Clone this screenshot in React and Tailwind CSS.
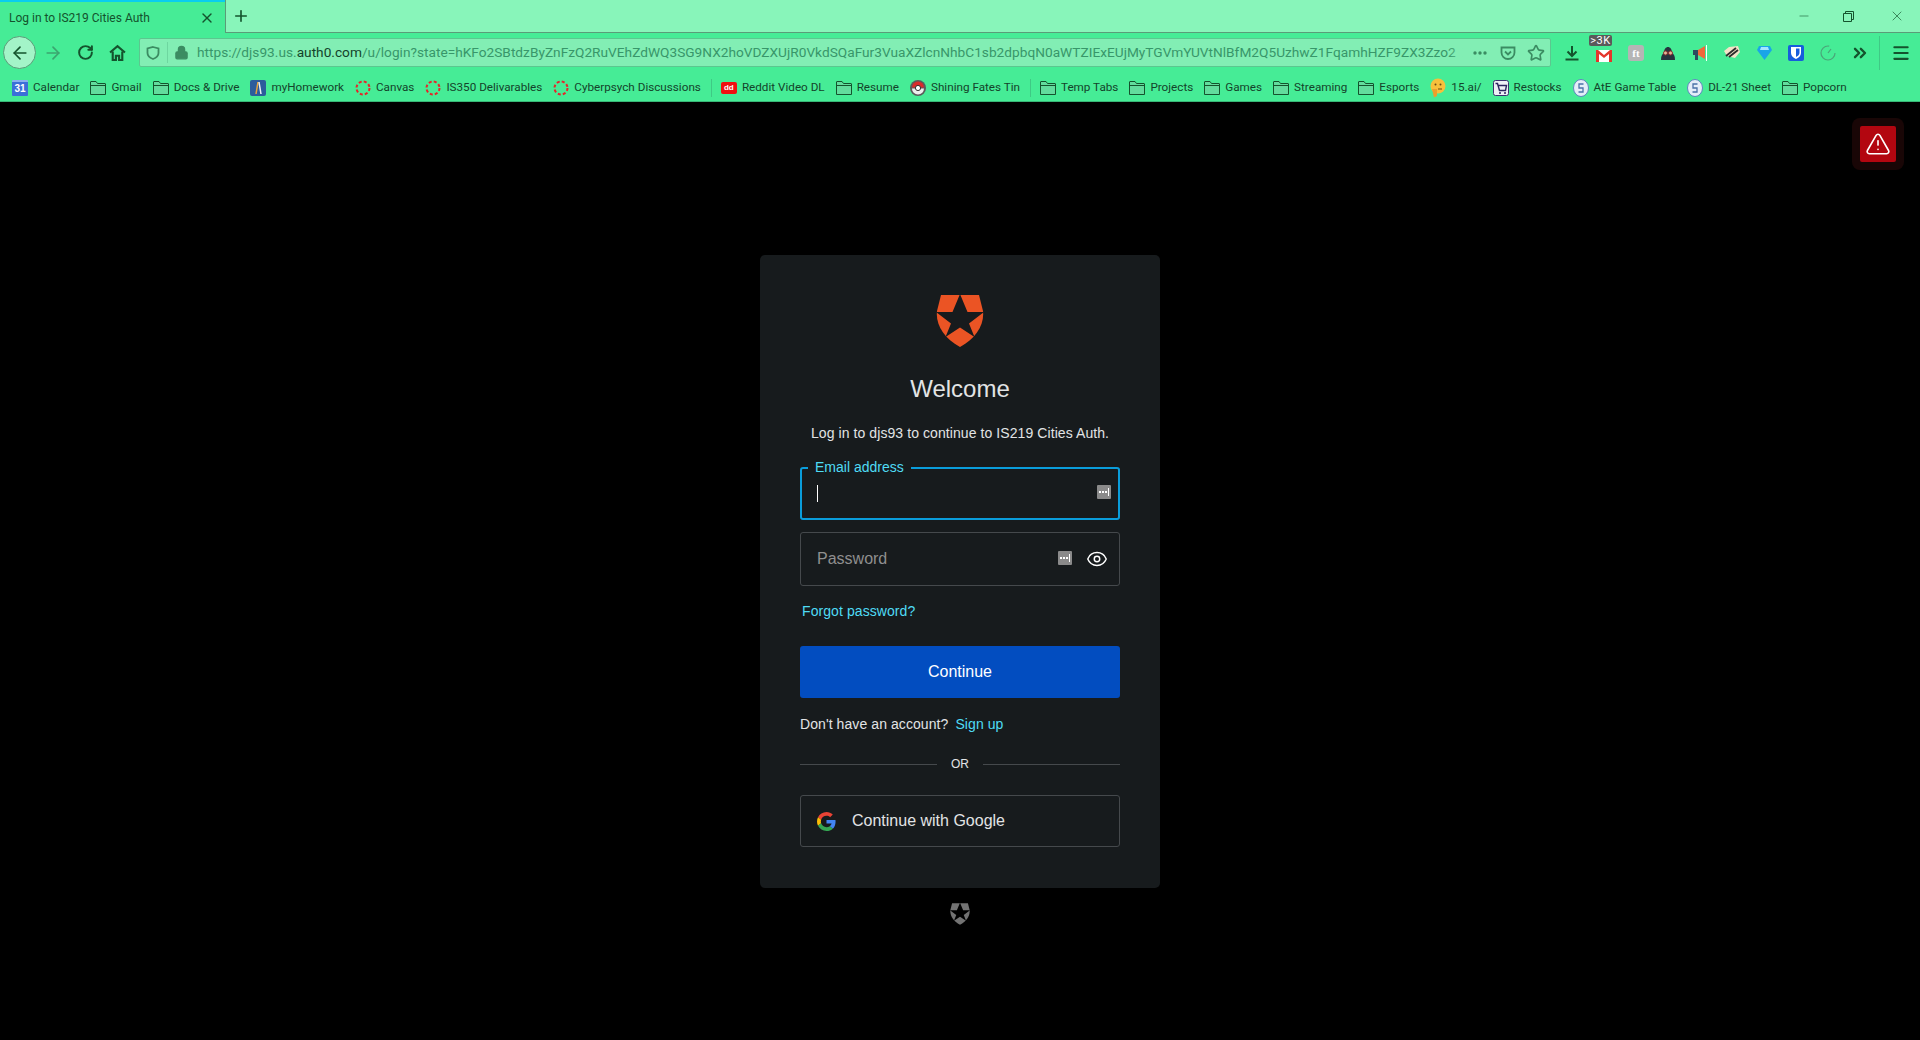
import React from 'react';
import { ArrowLeft, ArrowRight, RotateCw, ChevronsRight, Menu, Plus, X, Minus, Lock, Star, Eye, TriangleAlert } from 'lucide-react';

const Folder = () => (
  <svg width="16" height="16" viewBox="0 0 16 16" fill="none" stroke="#14532d" strokeWidth="1">
    <path d="M.5 14.500v-12.500a.5.5 0 0 1 .5-.5h5l1.500 2h7.500a.5.5 0 0 1 .5.5v10.500z" fill="#62dc9d" />
    <path d="M.5 5.500h15" />
  </svg>
);

const DashedCircle = () => (
  <svg width="16" height="16" viewBox="0 0 16 16" fill="none">
    <circle cx="8" cy="8" r="6.5" stroke="#e5252a" strokeWidth="2" strokeDasharray="3 2.100" />
  </svg>
);

const Calendar31 = () => (
  <span className="w-4 h-4 bg-[#3b6fd8] rounded-[1px] border-t-2 border-[#8ab0ee] text-white text-[10px] font-bold leading-[13px] text-center">31</span>
);

const Homework = () => (
  <svg width="16" height="16" viewBox="0 0 16 16">
    <rect width="16" height="16" rx="2" fill="#2c5c9c" />
    <path d="M6 14l2-12" stroke="#e8a33c" strokeWidth="1.500" />
    <path d="M9 2l2 12" stroke="#ecf0f6" strokeWidth="1.500" />
  </svg>
);

const RedditDl = () => (
  <span className="w-4 h-3 bg-[#f01010] rounded-[2px] text-white text-[8px] font-bold leading-[12px] text-center">dd</span>
);

const Pokeball = () => (
  <svg width="16" height="16" viewBox="0 0 16 16">
    <circle cx="8" cy="8" r="8" fill="#5b5b5b" />
    <path d="M2 7.500a6 6 0 0 1 12 0z" fill="#d92b2b" />
    <path d="M2 8.500a6 6 0 0 0 12 0z" fill="#eeeeee" />
    <circle cx="8" cy="8" r="2.600" fill="#fff" stroke="#333" />
  </svg>
);

const Thinking = () => (
  <svg width="16" height="20" viewBox="0 0 16 20">
    <circle cx="8" cy="8" r="7.500" fill="#f7c03c" />
    <circle cx="5.500" cy="6.500" r="1" fill="#6b4a12" />
    <circle cx="10.500" cy="6.500" r="1" fill="#6b4a12" />
    <path d="M8 11h4" stroke="#6b4a12" />
    <path d="M2 11h5v7l-3 1.500z" fill="#ee9f2c" />
  </svg>
);

const Cart = () => (
  <svg width="16" height="16" viewBox="0 0 16 16" fill="none">
    <rect x=".5" y=".5" width="15" height="15" rx="2" fill="#eef0f6" stroke="#3b3170" />
    <path d="M2.500 3.500h2l2 7h6l1-5h-8" stroke="#2c2560" strokeWidth="1.400" />
    <circle cx="7" cy="13" r="1" fill="#2c2560" />
    <circle cx="12" cy="13" r="1" fill="#2c2560" />
  </svg>
);

const SheetIcon = () => (
  <svg width="16" height="18" viewBox="0 0 16 18" fill="none">
    <ellipse cx="8" cy="9" rx="7.500" ry="8.500" fill="#e4edf8" stroke="#5d86bd" />
    <path d="M10.500 5H6v4h4v4H5.500" stroke="#4a71a8" strokeWidth="1.300" />
  </svg>
);

const bookmarks = [
  { label: 'Calendar', icon: <Calendar31 /> },
  { label: 'Gmail', icon: <Folder /> },
  { label: 'Docs & Drive', icon: <Folder /> },
  { label: 'myHomework', icon: <Homework /> },
  { label: 'Canvas', icon: <DashedCircle /> },
  { label: 'IS350 Delivarables', icon: <DashedCircle /> },
  { label: 'Cyberpsych Discussions', icon: <DashedCircle /> },
  { sep: true },
  { label: 'Reddit Video DL', icon: <RedditDl /> },
  { label: 'Resume', icon: <Folder /> },
  { label: 'Shining Fates Tin', icon: <Pokeball /> },
  { sep: true },
  { label: 'Temp Tabs', icon: <Folder /> },
  { label: 'Projects', icon: <Folder /> },
  { label: 'Games', icon: <Folder /> },
  { label: 'Streaming', icon: <Folder /> },
  { label: 'Esports', icon: <Folder /> },
  { label: '15.ai/', icon: <Thinking /> },
  { label: 'Restocks', icon: <Cart /> },
  { label: 'AtE Game Table', icon: <SheetIcon /> },
  { label: 'DL-21 Sheet', icon: <SheetIcon /> },
  { label: 'Popcorn', icon: <Folder /> },
];

const AuthLogo = ({ width, height, fill, star }) => (
  <svg width={width} height={height} viewBox="0 0 48 52">
    <path d="M5 0H43L47 16C48.500 30 40 43 24 52C8 43-.5 30 1 16Z" fill={fill} />
    <path d="M24-1L31.500 17H48L33 28.500L38.500 42L24 32.500L9.500 42L15 28.500L0 17H16.500Z" fill={star} />
  </svg>
);

const KeyBadge = () => (
  <span className="w-3.5 h-3.5 bg-[#8a8a8a] rounded-[1px] flex items-center justify-center gap-[1px]">
    <span className="w-[2px] h-[2px] bg-white" />
    <span className="w-[2px] h-[2px] bg-white" />
    <span className="w-[2px] h-[2px] bg-white" />
    <span className="w-px h-2 bg-white" />
  </span>
);

const GoogleG = () => (
  <svg width="19" height="19" viewBox="0 0 48 48">
    <path fill="#EA4335" d="M24 9.500c3.500 0 6.700 1.300 9.100 3.500l6.800-6.800C35.800 2.400 30.200 0 24 0 14.600 0 6.500 5.400 2.600 13.200l7.900 6.100C12.400 13.700 17.700 9.500 24 9.500z" />
    <path fill="#4285F4" d="M46.900 24.500c0-1.600-.1-3.100-.4-4.500H24v9h12.900c-.6 3-2.200 5.500-4.700 7.200l7.700 6c4.400-4.200 7-10.200 7-17.700z" />
    <path fill="#FBBC05" d="M10.500 28.700c-.5-1.400-.8-3-.8-4.700s.3-3.300.8-4.700l-7.900-6.100C.9 16.500 0 20.100 0 24s.9 7.500 2.600 10.800z" />
    <path fill="#34A853" d="M24 48c6.500 0 11.900-2.100 15.900-5.800l-7.700-6c-2.100 1.400-4.900 2.300-8.200 2.300-6.300 0-11.600-4.200-13.500-9.800l-7.900 6.100C6.500 42.600 14.600 48 24 48z" />
  </svg>
);

const Slot = ({ children }) => <div className="w-8 h-8 flex items-center justify-center shrink-0 relative">{children}</div>;

export default function App() {
  return (
    <div className="h-[1040px] bg-black flex flex-col overflow-hidden font-['Liberation_Sans',sans-serif]">
      {/* Tab strip */}
      <div className="h-[33px] bg-[#88f5ba] flex shrink-0">
        <div className="w-[225px] h-[33px] bg-[#46ec96] border-t-2 border-[#0acdf0] flex items-center pl-[9px] pr-[10px] justify-between">
          <span className="text-[12px] text-[#14532d] font-['Roboto',sans-serif]">Log in to IS219 Cities Auth</span>
          <X size={16} color="#14532d" />
        </div>
        <div className="flex-1 border-b border-l border-[#5a9c78] flex items-center">
          <Plus size={18} color="#14532d" className="ml-[6px]" strokeWidth={2.2} />
          <div className="flex-1" />
          <Minus size={14} color="#14532d" strokeWidth={1} className="mr-[32px]" />
          <svg width="11" height="11" viewBox="0 0 11 11" fill="none" stroke="#14532d" className="mr-[35px]">
            <path d="M.5 2.500h8v8h-8z" />
            <path d="M2.500 2.500v-2h8v8h-2" />
          </svg>
          <X size={16} color="#14532d" strokeWidth={1} className="mr-[15px]" />
        </div>
      </div>

      {/* Nav row */}
      <div className="h-[39px] bg-[#46ec96] flex items-center shrink-0 pl-[3px]">
        <div className="w-[33px] h-[33px] rounded-full bg-[#a3f4c8] border border-[#5a9c78] flex items-center justify-center shrink-0">
          <ArrowLeft size={20} color="#14532d" strokeWidth={2} />
        </div>
        <div className="w-px" />
        <Slot><ArrowRight size={20} color="#3ba56f" strokeWidth={2} /></Slot>
        <Slot><RotateCw size={17} color="#14532d" strokeWidth={2.800} /></Slot>
        <Slot>
          <svg width="17" height="17" viewBox="0 0 16 16" fill="none" stroke="#14532d" strokeWidth="2">
            <path d="M1 8l7-6 7 6" />
            <path d="M3.500 7v8h3v-4h3v4h3V7" />
          </svg>
        </Slot>
        <div className="ml-[6px] w-[1412px] h-[29px] bg-[#82eeb4] border border-[#5bc78f] rounded-[2px] flex items-center shrink-0 relative">
          <svg width="14" height="14" viewBox="0 0 14 14" fill="none" stroke="#3b8c62" strokeWidth="1.800" className="ml-[6px] shrink-0">
            <path d="M7 1l5.500 1.500v4.500c0 3-2.700 5-5.500 6-2.800-1-5.500-3-5.500-6V2.500z" />
          </svg>
          <div className="w-px h-[21px] bg-[#6ed6a0] ml-[7px] shrink-0" />
          <Lock size={15} color="#3b8c62" fill="#3b8c62" className="ml-[6px] shrink-0" />
          <div className="ml-[8px] w-[1275px] shrink-0 relative flex items-center">
            <span className="text-[13.7px] whitespace-nowrap text-[#38966a] font-['Roboto',sans-serif]">
              https://djs93.us.<span className="text-[#14432a]">auth0.com</span>/u/login?state=hKFo2SBtdzByZnFzQ2RuVEhZdWQ3SG9NX2hoVDZXUjR0VkdSQaFur3VuaXZlcnNhbC1sb2dpbqN0aWTZIExEUjMyTGVmYUVtNlBfM2Q5UzhwZ1FqamhHZF9ZX3Zzo2
            </span>
            <div className="absolute right-0 top-0 bottom-0 w-6 bg-gradient-to-r from-transparent to-[#82eeb4]" />
          </div>
          <svg width="16" height="16" viewBox="0 0 16 16" fill="#3b8c62" className="shrink-0">
            <circle cx="3" cy="8" r="1.700" />
            <circle cx="8" cy="8" r="1.700" />
            <circle cx="13" cy="8" r="1.700" />
          </svg>
          <svg width="16" height="16" viewBox="0 0 16 16" fill="none" stroke="#3b8c62" strokeWidth="1.800" className="ml-[12px] shrink-0">
            <path d="M1.500 2.500h13v5a6.500 6.500 0 0 1-13 0z" />
            <path d="M5 6.500L8 9.500l3-3" />
          </svg>
          <Star size={18} color="#3b8c62" strokeWidth={2.200} className="ml-[11px] shrink-0" />
        </div>
        <div className="w-[5px]" />
        <Slot>
          <svg width="16" height="16" viewBox="0 0 16 16" fill="none" stroke="#14532d" strokeWidth="2">
            <path d="M8 1v10" />
            <path d="M3.500 6.500L8 11l4.500-4.500" />
            <path d="M1.500 14.500h13" />
          </svg>
        </Slot>
        <Slot>
          <svg width="16" height="12" viewBox="0 0 16 12" className="mt-[6px]">
            <rect width="16" height="12" fill="#fff" />
            <path d="M0 0v12h3V4l5 4 5-4v8h3V0H14L8 5 2 0z" fill="#e5352b" />
          </svg>
          <span className="absolute top-[-2px] left-[1px] h-[11px] w-[23px] bg-[#5a5a5a] text-white text-[11px] leading-[11px] tracking-[0.5px] rounded-[2px] text-center font-['Roboto',sans-serif]">&gt;3K</span>
        </Slot>
        <Slot>
          <span className="w-4 h-4 bg-[#b5b5b5] rounded-[3px] text-white text-[11px] leading-[16px] text-center font-bold font-['Liberation_Serif',serif]">ft</span>
        </Slot>
        <Slot>
          <svg width="16" height="16" viewBox="0 0 16 16">
            <path d="M1 15c0-4 1-6 3-7 0-8 8-8 8 0 2 1 3 3 3 7z" fill="#26323d" />
            <circle cx="5.500" cy="8" r="2" fill="#e2b59a" stroke="#8c2f2f" />
            <circle cx="10.500" cy="8" r="2" fill="#e2b59a" stroke="#8c2f2f" />
          </svg>
        </Slot>
        <Slot>
          <svg width="16" height="16" viewBox="0 0 16 16">
            <path d="M1 5h5v5H1z" fill="#2b4a5f" />
            <path d="M3 10h3v5H3z" fill="#2b4a5f" />
            <path d="M6 5l7-4v13l-7-4z" fill="#f0683a" />
            <path d="M14.500 0v16" stroke="#fff" />
          </svg>
        </Slot>
        <Slot>
          <svg width="16" height="16" viewBox="0 0 16 16">
            <path d="M0 6l5-4 9-1 2 6-5 6-8-2z" fill="#f2e3c8" />
            <path d="M2 11l10-8M5 12l9-7" stroke="#2c2c2c" strokeWidth="1.800" />
          </svg>
        </Slot>
        <Slot>
          <svg width="15" height="15" viewBox="0 0 15 15">
            <path d="M2 1h11l2 4-7.500 10L0 5z" fill="#1aa5e8" />
            <path d="M4 2h7l1 3H3z" fill="#a5e6ff" />
          </svg>
        </Slot>
        <Slot>
          <span className="w-4 h-4 bg-[#175ddc] rounded-[2px] flex items-center justify-center">
            <svg width="10" height="12" viewBox="0 0 10 12" fill="#fff">
              <path d="M0 0h10v6c0 3-2.500 5-5 6-2.500-1-5-3-5-6zM5 1.500v8.500c1.500-.8 3.500-2 3.500-4V1.500z" />
            </svg>
          </span>
        </Slot>
        <Slot>
          <svg width="16" height="16" viewBox="0 0 16 16" fill="none" stroke="#4aa579" strokeWidth="1.200">
            <circle cx="8" cy="8" r="7" strokeDasharray="34 10" />
            <path d="M8 8l3-4" />
          </svg>
        </Slot>
        <Slot><ChevronsRight size={20} color="#14532d" strokeWidth={2.800} /></Slot>
        <div className="w-[3px]" />
        <div className="w-px h-[34px] bg-[#3fc985] shrink-0" />
        <div className="w-[5px]" />
        <Slot><Menu size={20} color="#14532d" strokeWidth={2.500} /></Slot>
      </div>

      {/* Bookmarks */}
      <div className="h-[30px] bg-[#46ec96] flex items-center shrink-0 pl-[12px] pt-[3px] border-b border-[#38b877]">
        {bookmarks.map((b, i) =>
          b.sep ? (
            <div key={i} className="w-px h-[18px] bg-[#3fc985] -ml-[1px] mr-[9px] shrink-0" />
          ) : (
            <div key={i} className="flex items-center gap-[5px] mr-[11px] shrink-0">
              <span className="w-4 h-4 flex items-center justify-center shrink-0">{b.icon}</span>
              <span className="text-[11.7px] whitespace-nowrap text-[#14432a] font-['Roboto',sans-serif]">{b.label}</span>
            </div>
          )
        )}
      </div>

      {/* Page */}
      <div className="flex-1 relative pt-[153px] flex flex-col items-center">
        <div className="absolute top-[16px] right-[16px] w-[52px] h-[52px] rounded-lg bg-[#190606] flex items-center justify-center">
          <div className="w-[36px] h-[36px] bg-[#b30610] rounded-[2px] flex items-center justify-center">
            <TriangleAlert size={26} color="#fff" strokeWidth={1.500} />
          </div>
        </div>

        <div className="w-[400px] h-[633px] bg-[#171b1d] rounded-[5px] px-[40px] pt-[40px] flex flex-col text-[#e2e4e5] shrink-0">
          <div className="flex justify-center">
            <AuthLogo width={48} height={52} fill="#eb5424" star="#171b1d" />
          </div>
          <h1 className="mt-[26px] text-[24px] leading-[32px] text-center font-normal">Welcome</h1>
          <p className="mt-[18px] text-[14px] leading-[21px] text-center tracking-[0.08px]">Log in to djs93 to continue to IS219 Cities Auth.</p>

          <div className="mt-[23px] h-[53px] border-2 border-[#0a9ddb] rounded-[3px] relative flex items-center pl-[15px] pr-[7px] justify-between">
            <span className="absolute -top-[9px] left-[6px] px-[7px] bg-[#171b1d] text-[14px] leading-[14px] text-[#4fdcf5]">Email address</span>
            <span className="w-px h-[17px] bg-white" />
            <span className="mb-[3px]"><KeyBadge /></span>
          </div>

          <div className="mt-[12px] h-[54px] border border-[#45494c] rounded-[3px] flex items-center pl-[16px] pr-[11px]">
            <span className="text-[16px] text-[#8f8f8f] flex-1">Password</span>
            <span className="mb-[3px]"><KeyBadge /></span>
            <Eye size={22} color="#fff" strokeWidth={1.600} className="ml-[14px] mb-[1px]" />
          </div>

          <a className="mt-[15px] ml-[2px] text-[14px] leading-[21px] text-[#4fdcf5] tracking-[0.08px]">Forgot password?</a>

          <button className="mt-[24px] h-[52px] bg-[#024dc0] rounded-[3px] text-white text-[16px] shrink-0">Continue</button>

          <p className="mt-[16px] text-[14px] leading-[21px] tracking-[0.08px]">
            Don't have an account? <a className="ml-[3px] text-[#4fdcf5]">Sign up</a>
          </p>

          <div className="mt-[21px] flex items-center text-[12px] leading-[16px]">
            <div className="flex-1 h-px bg-[#45494c]" />
            <span className="mx-[14px]">OR</span>
            <div className="flex-1 h-px bg-[#45494c]" />
          </div>

          <div className="mt-[23px] h-[52px] border border-[#45494c] rounded-[3px] flex items-center pl-[16px] gap-[16px] text-[16px] shrink-0">
            <GoogleG />
            <span>Continue with Google</span>
          </div>
        </div>

        <div className="mt-[15px]">
          <AuthLogo width={20} height={22} fill="#737373" star="#000000" />
        </div>
      </div>
    </div>
  );
}
